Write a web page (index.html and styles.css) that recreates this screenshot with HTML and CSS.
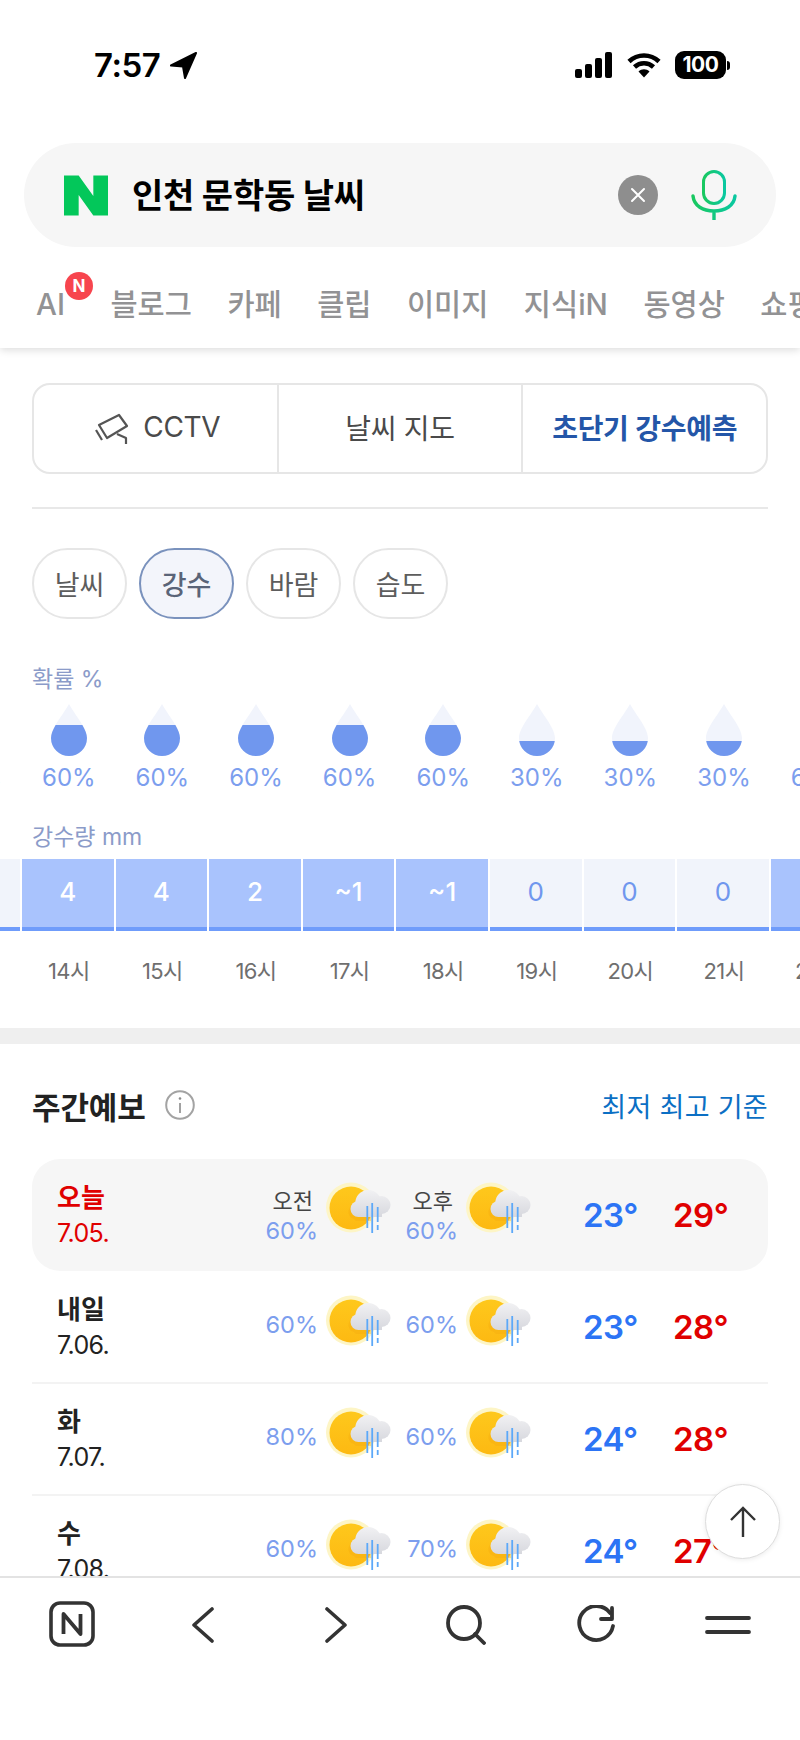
FILE: index.html
```html
<!DOCTYPE html>
<html lang="ko">
<head>
<meta charset="utf-8">
<title>인천 문학동 날씨</title>
<link rel="stylesheet" href="styles.css">
</head>
<body>
<svg class="defs" width="0" height="0" aria-hidden="true">
  <defs>
    <path id="dropShape" d="M18 0C22 8 36 24 36 34A18 18 0 0 1 0 34C0 24 14 8 18 0Z"/>
    <clipPath id="clip60"><rect x="0" y="21" width="36" height="31"/></clipPath>
    <clipPath id="clip30"><rect x="0" y="37" width="36" height="15"/></clipPath>
    <symbol id="drop60" viewBox="0 0 36 52">
      <use href="#dropShape" fill="#f1f4fc"/>
      <use href="#dropShape" fill="#7097ee" clip-path="url(#clip60)"/>
    </symbol>
    <symbol id="drop30" viewBox="0 0 36 52">
      <use href="#dropShape" fill="#f1f4fc"/>
      <use href="#dropShape" fill="#7097ee" clip-path="url(#clip30)"/>
    </symbol>
    <linearGradient id="sunGrad" x1="0" y1="0" x2="0" y2="1">
      <stop offset="0" stop-color="#fec81c"/>
      <stop offset="1" stop-color="#fdb912"/>
    </linearGradient>
    <linearGradient id="cloudGrad" gradientUnits="userSpaceOnUse" x1="42" y1="8" x2="42" y2="36">
      <stop offset="0" stop-color="#f1f1f3"/>
      <stop offset="1" stop-color="#d6d7dd"/>
    </linearGradient>
    <symbol id="wx" viewBox="0 0 66 52">
      <circle cx="25" cy="25.5" r="25" fill="#fdf5c6"/>
      <circle cx="25" cy="26" r="21.5" fill="url(#sunGrad)"/>
      <path d="M28 37a7 7 0 0 1 3-14h14v16H30Z" fill="#f3a90f" opacity=".35"/>
      <g fill="url(#cloudGrad)">
        <circle cx="42.3" cy="21" r="13"/>
        <circle cx="55.5" cy="23" r="9"/>
        <circle cx="32.5" cy="27" r="8"/>
        <rect x="32" y="24" width="24" height="11" />
      </g>
      <g stroke="#5ca8f8" stroke-width="1.8" fill="none">
        <path d="M41.3 24V46"/>
        <path d="M46.2 21V51"/>
        <path d="M51.7 25V40"/>
        <path d="M51.7 43V48"/>
      </g>
    </symbol>
  </defs>
</svg>

<div class="phone">
  <header class="top">
    <div class="status">
      <div class="status-left">
        <span class="clock">7:57</span>
        <svg class="loc" viewBox="0 0 27 27"><path d="M26 1 1 13.5 13 14.5 15 26Z" fill="#000" stroke="#000" stroke-width="2" stroke-linejoin="round"/></svg>
      </div>
      <div class="status-right">
        <svg class="signal" viewBox="0 0 38 26"><rect x="0" y="17" width="7" height="9" rx="2"/><rect x="10" y="12" width="7" height="14" rx="2"/><rect x="20" y="6" width="7" height="20" rx="2"/><rect x="30" y="0" width="7" height="26" rx="2"/></svg>
        <svg class="wifi" viewBox="0 0 34 26"><path d="M2 9.5C10.500 1.500 23.500 1.500 32 9.500" fill="none" stroke="#000" stroke-width="4.600"/><path d="M7.500 15C13 10 21 10 26.500 15" fill="none" stroke="#000" stroke-width="4.600"/><path d="M11.500 19.500C14.500 16.500 19.500 16.500 22.500 19.500L17 25.500Z" fill="#000"/></svg>
        <div class="battery"><span class="battery-body">100</span><span class="battery-nub"></span></div>
      </div>
    </div>

    <div class="search">
      <svg class="naver" viewBox="0 0 45 41"><path d="M0 0H15L30 21V0H45V41H30L15 20V41H0Z" fill="#03c75a"/></svg>
      <span class="query">인천 문학동 날씨</span>
      <span class="clear"><svg viewBox="0 0 16 16" width="16" height="16"><path d="M2 2 14 14M14 2 2 14" stroke="#fff" stroke-width="2" stroke-linecap="round"/></svg></span>
      <svg class="mic" viewBox="0 0 46 50">
        <defs><linearGradient id="micGrad" x1="0" y1="0" x2="1" y2="0"><stop offset="0" stop-color="#19c860"/><stop offset="1" stop-color="#0ac8a0"/></linearGradient></defs>
        <rect x="12.500" y="1.500" width="21" height="32" rx="10.500" fill="none" stroke="url(#micGrad)" stroke-width="3"/>
        <path d="M2 26C3 36 12 41 23 41S43 36 44 26M23 41V50" fill="none" stroke="url(#micGrad)" stroke-width="3.400" stroke-linecap="round"/>
      </svg>
    </div>

    <nav class="tabs">
      <span class="tab tab-ai">AI<span class="badge">N</span></span>
      <span class="tab">블로그</span>
      <span class="tab">카페</span>
      <span class="tab">클립</span>
      <span class="tab">이미지</span>
      <span class="tab">지식iN</span>
      <span class="tab">동영상</span>
      <span class="tab">쇼핑</span>
    </nav>
  </header>

  <main class="content">
    <section class="rain-sec">
      <div class="btn-group">
        <div class="btn">
          <svg class="cctv" viewBox="0 0 36 32" fill="none" stroke="#555" stroke-width="2.200" stroke-linejoin="round"><path d="M5 12 25 2 33 13 13 25Z"/><path d="M2 17 8 27"/><path d="M23 21 32 25V31"/></svg>
          <span class="btn-text">CCTV</span>
        </div>
        <div class="btn"><span class="btn-text">날씨 지도</span></div>
        <div class="btn btn-on"><span class="btn-text">초단기 강수예측</span></div>
      </div>
      <div class="rule"></div>
      <div class="pills">
        <span class="pill">날씨</span>
        <span class="pill pill-on">강수</span>
        <span class="pill">바람</span>
        <span class="pill">습도</span>
      </div>

      <div class="label label-prob">확률 %</div>
      <div class="track track-drops">
        <div class="cell"><svg class="drop"><use href="#drop60"/></svg><span class="pct">60%</span></div>
        <div class="cell"><svg class="drop"><use href="#drop60"/></svg><span class="pct">60%</span></div>
        <div class="cell"><svg class="drop"><use href="#drop60"/></svg><span class="pct">60%</span></div>
        <div class="cell"><svg class="drop"><use href="#drop60"/></svg><span class="pct">60%</span></div>
        <div class="cell"><svg class="drop"><use href="#drop60"/></svg><span class="pct">60%</span></div>
        <div class="cell"><svg class="drop"><use href="#drop60"/></svg><span class="pct">60%</span></div>
        <div class="cell"><svg class="drop"><use href="#drop30"/></svg><span class="pct">30%</span></div>
        <div class="cell"><svg class="drop"><use href="#drop30"/></svg><span class="pct">30%</span></div>
        <div class="cell"><svg class="drop"><use href="#drop30"/></svg><span class="pct">30%</span></div>
        <div class="cell"><svg class="drop"><use href="#drop60"/></svg><span class="pct">60%</span></div>
      </div>

      <div class="label label-amt">강수량 mm</div>
      <div class="track track-bars">
        <div class="cell"><div class="bar bar-dry">0</div></div>
        <div class="cell"><div class="bar">4</div></div>
        <div class="cell"><div class="bar">4</div></div>
        <div class="cell"><div class="bar">2</div></div>
        <div class="cell"><div class="bar">~1</div></div>
        <div class="cell"><div class="bar">~1</div></div>
        <div class="cell"><div class="bar bar-dry">0</div></div>
        <div class="cell"><div class="bar bar-dry">0</div></div>
        <div class="cell"><div class="bar bar-dry">0</div></div>
        <div class="cell"><div class="bar">2</div></div>
      </div>
      <div class="track track-hours">
        <div class="cell hour">13시</div>
        <div class="cell hour">14시</div>
        <div class="cell hour">15시</div>
        <div class="cell hour">16시</div>
        <div class="cell hour">17시</div>
        <div class="cell hour">18시</div>
        <div class="cell hour">19시</div>
        <div class="cell hour">20시</div>
        <div class="cell hour">21시</div>
        <div class="cell hour">22시</div>
      </div>
    </section>

    <div class="band"></div>

    <section class="week">
      <div class="week-head">
        <div class="week-title">
          <h2>주간예보</h2>
          <svg class="info" viewBox="0 0 30 30" fill="none"><circle cx="15" cy="15" r="13.800" stroke="#a3a3a3" stroke-width="2"/><path d="M15 13V23" stroke="#8a8a8a" stroke-width="1.600"/><circle cx="15" cy="8.500" r="1.300" fill="#8a8a8a"/></svg>
        </div>
        <span class="basis">최저 최고 기준</span>
      </div>

      <div class="day day-today">
        <div class="day-name"><strong>오늘</strong><span>7.05.</span></div>
        <div class="period"><div class="pop"><span class="ampm">오전</span><span class="pop-val">60%</span></div><svg class="wx"><use href="#wx"/></svg></div>
        <div class="period"><div class="pop"><span class="ampm">오후</span><span class="pop-val">60%</span></div><svg class="wx"><use href="#wx"/></svg></div>
        <div class="temps"><span class="low">23°</span><span class="high">29°</span></div>
      </div>

      <div class="day">
        <div class="day-name"><strong>내일</strong><span>7.06.</span></div>
        <div class="period"><div class="pop"><span class="pop-val">60%</span></div><svg class="wx"><use href="#wx"/></svg></div>
        <div class="period"><div class="pop"><span class="pop-val">60%</span></div><svg class="wx"><use href="#wx"/></svg></div>
        <div class="temps"><span class="low">23°</span><span class="high">28°</span></div>
      </div>

      <div class="day">
        <div class="day-name"><strong>화</strong><span>7.07.</span></div>
        <div class="period"><div class="pop"><span class="pop-val">80%</span></div><svg class="wx"><use href="#wx"/></svg></div>
        <div class="period"><div class="pop"><span class="pop-val">60%</span></div><svg class="wx"><use href="#wx"/></svg></div>
        <div class="temps"><span class="low">24°</span><span class="high">28°</span></div>
      </div>

      <div class="day">
        <div class="day-name"><strong>수</strong><span>7.08.</span></div>
        <div class="period"><div class="pop"><span class="pop-val">60%</span></div><svg class="wx"><use href="#wx"/></svg></div>
        <div class="period"><div class="pop"><span class="pop-val">70%</span></div><svg class="wx"><use href="#wx"/></svg></div>
        <div class="temps"><span class="low">24°</span><span class="high">27°</span></div>
      </div>
    </section>
  </main>

  <button class="to-top" type="button" aria-label="맨 위로">
    <svg viewBox="0 0 28 32" width="28" height="32" fill="none" stroke="#333" stroke-width="2.400"><path d="M14 31V2M2 14 14 2 26 14"/></svg>
  </button>

  <footer class="bar-bottom">
    <svg class="nav-n" viewBox="0 0 46 46"><rect x="2" y="2" width="42" height="42" rx="9" fill="none" stroke="#333" stroke-width="3.600"/><path d="M14.500 33V13L31.500 33V13" fill="none" stroke="#333" stroke-width="3.800" stroke-linejoin="round"/></svg>
    <svg class="nav-chev" viewBox="0 0 24 36"><path d="M21 2 3 18 21 34" fill="none" stroke="#333" stroke-width="3.600" stroke-linecap="round" stroke-linejoin="round"/></svg>
    <svg class="nav-chev nav-next" viewBox="0 0 24 36"><path d="M3 2 21 18 3 34" fill="none" stroke="#333" stroke-width="3.600" stroke-linecap="round" stroke-linejoin="round"/></svg>
    <svg class="nav-search" viewBox="0 0 40 40" fill="none" stroke="#333" stroke-width="3.800" stroke-linecap="round"><circle cx="18" cy="18" r="16"/><path d="M29 29 38 38"/></svg>
    <svg class="nav-reload" viewBox="0 0 38 38" fill="none" stroke="#333" stroke-width="3.800" stroke-linecap="round" stroke-linejoin="round"><path d="M33 8A17 17 0 1 0 36 21"/><path d="M35 3V14H24"/></svg>
    <svg class="nav-menu" viewBox="0 0 46 20"><path d="M2 3H44M2 17H44" stroke="#333" stroke-width="3.800" stroke-linecap="round"/></svg>
  </footer>
</div>
</body>
</html>
```
FILE: styles.css
```css
* { box-sizing: border-box; }
html, body { margin: 0; padding: 0; background: #fff; }
body { font-family: Inter, "Noto Sans CJK KR", sans-serif; color: #222; }
.defs { position: absolute; }
.phone { position: relative; width: 800px; height: 1740px; overflow: hidden; display: flex; flex-direction: column; background: #fff; }

/* header */
.top { height: 348px; flex: none; background: #fff; box-shadow: 0 2px 8px rgba(0,0,0,.14); position: relative; z-index: 2; padding: 0 24px; }
.status { height: 143px; margin: 0 -24px; padding: 50px 70px 0 94px; display: flex; justify-content: space-between; align-items: flex-start; }
.status-left { display: flex; align-items: center; gap: 10px; height: 30px; }
.clock { font-size: 33px; font-weight: 600; line-height: 30px; color: #000; letter-spacing: -.5px; }
.loc { width: 27px; height: 27px; }
.status-right { display: flex; align-items: center; height: 30px; }
.signal { width: 38px; height: 26px; margin-right: 14px; }
.wifi { width: 34px; height: 26px; margin-right: 14px; }
.battery { display: flex; align-items: center; }
.battery-body { width: 51px; height: 28px; border-radius: 9px; background: #000; color: #fff; font-size: 21px; font-weight: 700; line-height: 28px; text-align: center; letter-spacing: -.5px; }
.battery-nub { width: 3px; height: 9px; background: #000; border-radius: 0 3px 3px 0; margin-left: 1px; }

.search { height: 104px; border-radius: 52px; background: #f6f6f6; display: flex; align-items: center; padding: 0 39px 0 40px; }
.naver { width: 44px; height: 41px; flex: none; }
.query { font-size: 34px; font-weight: 700; color: #000; margin: -4px 0 0 24px; flex: 1; letter-spacing: -.25px; }
.clear { width: 40px; height: 40px; border-radius: 50%; background: #8e8e8e; display: flex; align-items: center; justify-content: center; flex: none; }
.mic { width: 46px; height: 50px; margin-left: 33px; flex: none; }

.tabs { display: flex; gap: 35.5px; margin: 35px -24px 0; padding-left: 36px; white-space: nowrap; }
.tab { font-size: 29.5px; font-weight: 500; color: #929294; line-height: 44px; flex: none; }
.tab-ai { position: relative; margin-right: 10px; }
.badge { position: absolute; left: 29px; top: -10px; width: 28px; height: 28px; border-radius: 50%; background: #f7454e; color: #fff; font-size: 17px; font-weight: 700; line-height: 28px; text-align: center; }

/* content */
.content { flex: 1; min-height: 0; overflow: hidden; }
.rain-sec { height: 680px; padding-top: 35px; }
.btn-group { display: flex; margin: 0 32px; height: 91px; border: 2px solid #e6e6e6; border-radius: 18px; }
.btn { flex: 1 1 0; display: flex; align-items: center; justify-content: center; gap: 13px; font-size: 28px; color: #4a4a4a; }
.btn-text { margin-top: -4px; letter-spacing: -.3px; }
.btn + .btn { border-left: 2px solid #e6e6e6; }
.btn-on { color: #2456a8; font-weight: 600; }
.cctv { width: 36px; height: 32px; margin-left: 4px; }
.rule { height: 2px; background: #e8e8e8; margin: 33px 32px 0; }
.pills { display: flex; gap: 12px; margin: 39px 32px 0; }
.pill { width: 95px; height: 71px; border: 2px solid #e6e6e6; border-radius: 36px; display: flex; align-items: center; justify-content: center; font-size: 27px; color: #5d5d5d; }
.pill-on { background: #f3f5fb; border-color: #7a92bd; color: #5a6478; font-weight: 500; }

.label { font-size: 23px; color: #8b9bc9; margin-left: 32px; line-height: 26px; }
.label-prob { margin-top: 47px; }
.label-amt { margin-top: 32px; }
.track { display: flex; margin-left: -72.6px; width: 936px; }
.cell { width: 93.6px; flex: none; display: flex; flex-direction: column; align-items: center; }
.track-drops { margin-top: 12px; margin-left: -71.6px; }
.drop { width: 36px; height: 52px; }
.pct { font-size: 24px; line-height: 28px; color: #7c9eee; margin-top: 8px; white-space: nowrap; }
.track-bars { margin-top: 9px; }
.track-bars .cell { padding: 0 1px; }
.bar { width: 100%; height: 72px; padding-bottom: 4px; background: #a9c3fd; border-bottom: 4px solid #6f9cfb; color: #fff; font-size: 26px; font-weight: 500; display: flex; align-items: center; justify-content: center; }
.bar-dry { background: #f1f4fb; color: #7097ee; font-weight: 400; }
.track-hours { margin-top: 25px; margin-left: -71.6px; }
.hour { font-size: 22px; line-height: 30px; color: #6f6f6f; letter-spacing: -.6px; white-space: nowrap; }

.band { height: 16px; background: #efefef; }

/* weekly */
.week { padding: 0 32px; }
.week-head { display: flex; justify-content: space-between; align-items: center; height: 34px; margin-top: 44px; margin-bottom: 37px; }
.week-title { display: flex; align-items: center; gap: 19px; }
.week-title h2 { margin: 0; font-size: 31px; font-weight: 600; color: #222; letter-spacing: -.1px; }
.info { width: 30px; height: 30px; }
.basis { font-size: 27px; color: #0b6fc4; letter-spacing: .3px; }
.day { height: 112px; display: flex; align-items: center; padding-left: 25px; border-bottom: 2px solid #f3f3f3; }
.day-today { background: #f6f6f6; border-bottom: 0; border-radius: 28px; margin-bottom: 1px; }
.day-name { width: 198px; display: flex; flex-direction: column; gap: 5px; margin-top: 1px; }
.day-name strong { font-size: 26px; font-weight: 600; line-height: 30px; color: #222; }
.day-name span { font-size: 25px; line-height: 30px; color: #222; letter-spacing: -.6px; }
.day-today .day-name strong, .day-today .day-name span { color: #e00000; }
.period { width: 137px; margin-right: 3px; display: flex; align-items: center; flex: none; }
.pop { width: 63px; display: flex; flex-direction: column; align-items: flex-end; margin-top: -4px; gap: 5px; }
.day-today .pop { margin-top: 2px; gap: 2px; }
.ampm { font-size: 22px; line-height: 27px; color: #444; padding-right: 5px; }
.pop-val { font-size: 23.5px; line-height: 28px; color: #7c9eee; }
.wx { width: 66px; height: 52px; margin-left: 8px; margin-top: -12px; flex: none; }
.day-today .wx { margin-top: -14px; }
.temps { display: flex; margin-left: 48px; }
.temps span { width: 90px; font-size: 33px; font-weight: 600; letter-spacing: -.5px; }
.low { color: #2c74f5; }
.high { color: #e00000; }

.to-top { position: absolute; left: 705px; top: 1484px; width: 75px; height: 75px; border-radius: 50%; background: #fff; border: 1px solid #ddd; box-shadow: 0 1px 5px rgba(0,0,0,.08); display: flex; align-items: center; justify-content: center; padding: 0; z-index: 3; }

.bar-bottom { height: 164px; flex: none; background: #fff; border-top: 2px solid #e3e3e3; position: relative; z-index: 2; display: grid; grid-template-columns: repeat(6, 131px); align-items: start; justify-items: center; padding: 23px 6px 0; }
.nav-n { width: 46px; height: 46px; }
.nav-chev { width: 24px; height: 36px; margin-top: 6px; }
.nav-next { margin-left: 5px; }
.nav-search { width: 40px; height: 40px; margin: 4px 0 0 2px; }
.nav-reload { width: 38px; height: 38px; margin-top: 4px; }
.nav-menu { width: 46px; height: 20px; margin: 14px 0 0 3px; }
```
